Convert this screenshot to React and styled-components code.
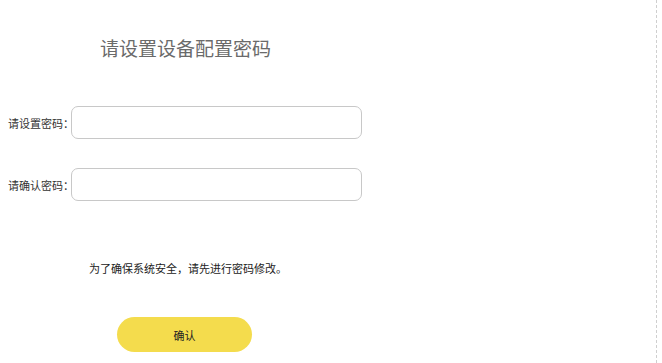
import React from 'react';
import styled, { createGlobalStyle } from 'styled-components';

const GlobalStyle = createGlobalStyle`
  html, body {
    margin: 0;
    padding: 0;
    background: #fff;
  }
  body {
    font-family: "Noto Sans CJK SC", "Noto Sans", sans-serif;
    color: #333;
  }
`;

const Page = styled.div`
  width: 657px;
  height: 363px;
  border-right: 1px dashed #cfcfcf;
  box-sizing: border-box;
  overflow: hidden;
`;

const Title = styled.h1`
  margin: 0;
  padding: 35px 0 0 100px;
  font-size: 19px;
  line-height: 26px;
  font-weight: 400;
  color: #6a6a6a;
`;

const Form = styled.div`
  display: flex;
  flex-direction: column;
  gap: 29px;
  margin-top: 45px;
`;

const Row = styled.div`
  display: flex;
  align-items: center;
`;

const Label = styled.label`
  width: 71px;
  padding-left: 8px;
  box-sizing: border-box;
  font-size: 11px;
  color: #333;
  white-space: nowrap;
`;

const Input = styled.input`
  width: 291px;
  height: 33px;
  box-sizing: border-box;
  border: 1px solid #c8c8c8;
  border-radius: 7px;
  outline: none;
  padding: 0 8px;
  font: inherit;
`;

const Notice = styled.p`
  margin: 59px 0 0 89px;
  font-size: 11px;
  line-height: 16px;
  color: #222;
`;

const Button = styled.button`
  display: block;
  margin: 41px 0 0 117px;
  width: 135px;
  height: 35px;
  border: none;
  border-radius: 18px;
  background: #f4dc4d;
  font-family: inherit;
  font-size: 11px;
  color: #222;
  cursor: pointer;
`;

const App = () => (
  <>
    <GlobalStyle />
    <Page>
      <Title>请设置设备配置密码</Title>
      <Form>
        <Row>
          <Label>请设置密码：</Label>
          <Input type="password" />
        </Row>
        <Row>
          <Label>请确认密码：</Label>
          <Input type="password" />
        </Row>
      </Form>
      <Notice>为了确保系统安全，请先进行密码修改。</Notice>
      <Button>确认</Button>
    </Page>
  </>
);

export default App;
